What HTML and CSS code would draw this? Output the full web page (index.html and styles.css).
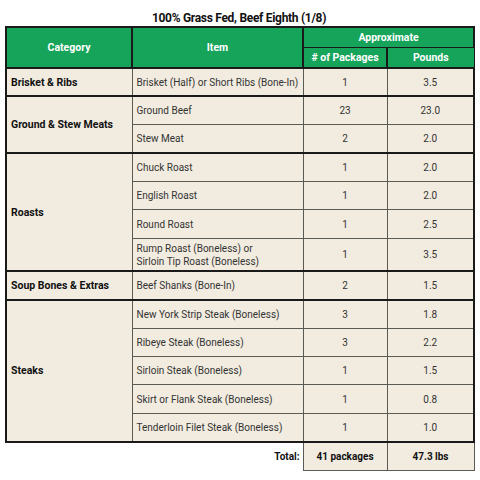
FILE: index.html
```html
<!DOCTYPE html>
<html lang="en">
<head>
    <meta charset="UTF-8">
    <title>Beef Eighth</title>
    <link rel="stylesheet" href="styles.css">
</head>
<body>
    <div class="page">
        <h1 class="title">100% Grass Fed, Beef Eighth (1/8)</h1>
        <table class="beef">
            <colgroup>
                <col class="c-cat">
                <col class="c-item">
                <col class="c-pkg">
                <col class="c-lbs">
            </colgroup>
            <thead>
                <tr class="h1">
                    <th rowspan="2">Category</th>
                    <th rowspan="2">Item</th>
                    <th colspan="2">Approximate</th>
                </tr>
                <tr class="h2">
                    <th># of Packages</th>
                    <th>Pounds</th>
                </tr>
            </thead>
            <tbody>
                <tr class="group">
                    <td class="cat">Brisket &amp; Ribs</td>
                    <td class="item">Brisket (Half) or Short Ribs (Bone-In)</td>
                    <td>1</td>
                    <td>3.5</td>
                </tr>
                <tr class="group">
                    <td class="cat" rowspan="2">Ground &amp; Stew Meats</td>
                    <td class="item">Ground Beef</td>
                    <td>23</td>
                    <td>23.0</td>
                </tr>
                <tr>
                    <td class="item">Stew Meat</td>
                    <td>2</td>
                    <td>2.0</td>
                </tr>
                <tr class="group">
                    <td class="cat" rowspan="4">Roasts</td>
                    <td class="item">Chuck Roast</td>
                    <td>1</td>
                    <td>2.0</td>
                </tr>
                <tr>
                    <td class="item">English Roast</td>
                    <td>1</td>
                    <td>2.0</td>
                </tr>
                <tr>
                    <td class="item">Round Roast</td>
                    <td>1</td>
                    <td>2.5</td>
                </tr>
                <tr class="tall">
                    <td class="item">Rump Roast (Boneless) or<br>Sirloin Tip Roast (Boneless)</td>
                    <td>1</td>
                    <td>3.5</td>
                </tr>
                <tr class="group">
                    <td class="cat">Soup Bones &amp; Extras</td>
                    <td class="item">Beef Shanks (Bone-In)</td>
                    <td>2</td>
                    <td>1.5</td>
                </tr>
                <tr class="group">
                    <td class="cat" rowspan="5">Steaks</td>
                    <td class="item">New York Strip Steak (Boneless)</td>
                    <td>3</td>
                    <td>1.8</td>
                </tr>
                <tr>
                    <td class="item">Ribeye Steak (Boneless)</td>
                    <td>3</td>
                    <td>2.2</td>
                </tr>
                <tr>
                    <td class="item">Sirloin Steak (Boneless)</td>
                    <td>1</td>
                    <td>1.5</td>
                </tr>
                <tr>
                    <td class="item">Skirt or Flank Steak (Boneless)</td>
                    <td>1</td>
                    <td>0.8</td>
                </tr>
                <tr>
                    <td class="item">Tenderloin Filet Steak (Boneless)</td>
                    <td>1</td>
                    <td>1.0</td>
                </tr>
            </tbody>
            <tfoot>
                <tr>
                    <td class="blank"></td>
                    <td class="label">Total:</td>
                    <td class="sum">41 packages</td>
                    <td class="sum">47.3 lbs</td>
                </tr>
            </tfoot>
        </table>
    </div>
</body>
</html>
```

FILE: styles.css
```css
* {
    margin: 0;
    padding: 0;
    box-sizing: border-box;
}

body {
    font-family: Roboto, "Liberation Sans", sans-serif;
    background-color: #ffffff;
    color: #222;
}

.page {
    padding: 10px 7px 0 5px;
}

.title {
    font-size: 12px;
    font-weight: bold;
    text-align: center;
    color: #111;
    height: 16px;
    line-height: 17px;
    letter-spacing: -0.3px;
}

.beef {
    width: 468px;
    border-collapse: collapse;
    table-layout: fixed;
    font-size: 10px;
}

.c-cat { width: 126px; }
.c-item { width: 171px; }
.c-pkg { width: 84px; }
.c-lbs { width: 87px; }

.beef th {
    background-color: #16a35a;
    color: #fff;
    font-weight: bold;
    font-size: 10.5px;
    border: 2px solid #1a1a1a;
}

.beef .h1 th[colspan] {
    border-bottom: 1px solid #1a1a1a;
    height: 20px;
}

.beef .h2 th {
    border-top: 1px solid #1a1a1a;
    height: 21px;
    border-right-width: 1px;
}

.beef .h2 th:first-child {
    border-left-width: 1px;
}

.beef .h1 th:nth-child(2) {
    border-left-width: 1px;
}

.beef td {
    background-color: #f2ece0;
    border: 1px solid #5a5a55;
    height: 28.4px;
    text-align: center;
    color: #333;
}

.beef td.cat {
    text-align: left;
    font-weight: bold;
    font-size: 10.5px;
    color: #111;
    padding-left: 4px;
    border-left: 2px solid #1a1a1a;
}

.beef td.item {
    text-align: left;
    padding-left: 4px;
}

.beef tr td:last-child {
    border-right: 2px solid #1a1a1a;
}

.beef tr.group td {
    border-top: 2px solid #1a1a1a;
}

.beef tr.tall td {
    height: 33px;
    line-height: 13px;
}

.beef tbody tr:last-child td,
.beef tbody td.cat[rowspan="5"] {
    border-bottom: 2px solid #1a1a1a;
}

.beef tfoot td {
    height: 28.4px;
    font-weight: bold;
    color: #111;
}

.beef tfoot td.blank,
.beef tfoot td.label {
    background-color: transparent;
    border: none;
    border-top: 2px solid #1a1a1a;
}

.beef tfoot td.label {
    text-align: right;
    padding-right: 3px;
}

.beef tfoot td.sum {
    border: 1px solid #5a5a55;
    border-top: 2px solid #1a1a1a;
    background-color: #f2ece0;
}

.beef tfoot td.sum:last-child {
    border-right: 1px solid #5a5a55;
}
```
